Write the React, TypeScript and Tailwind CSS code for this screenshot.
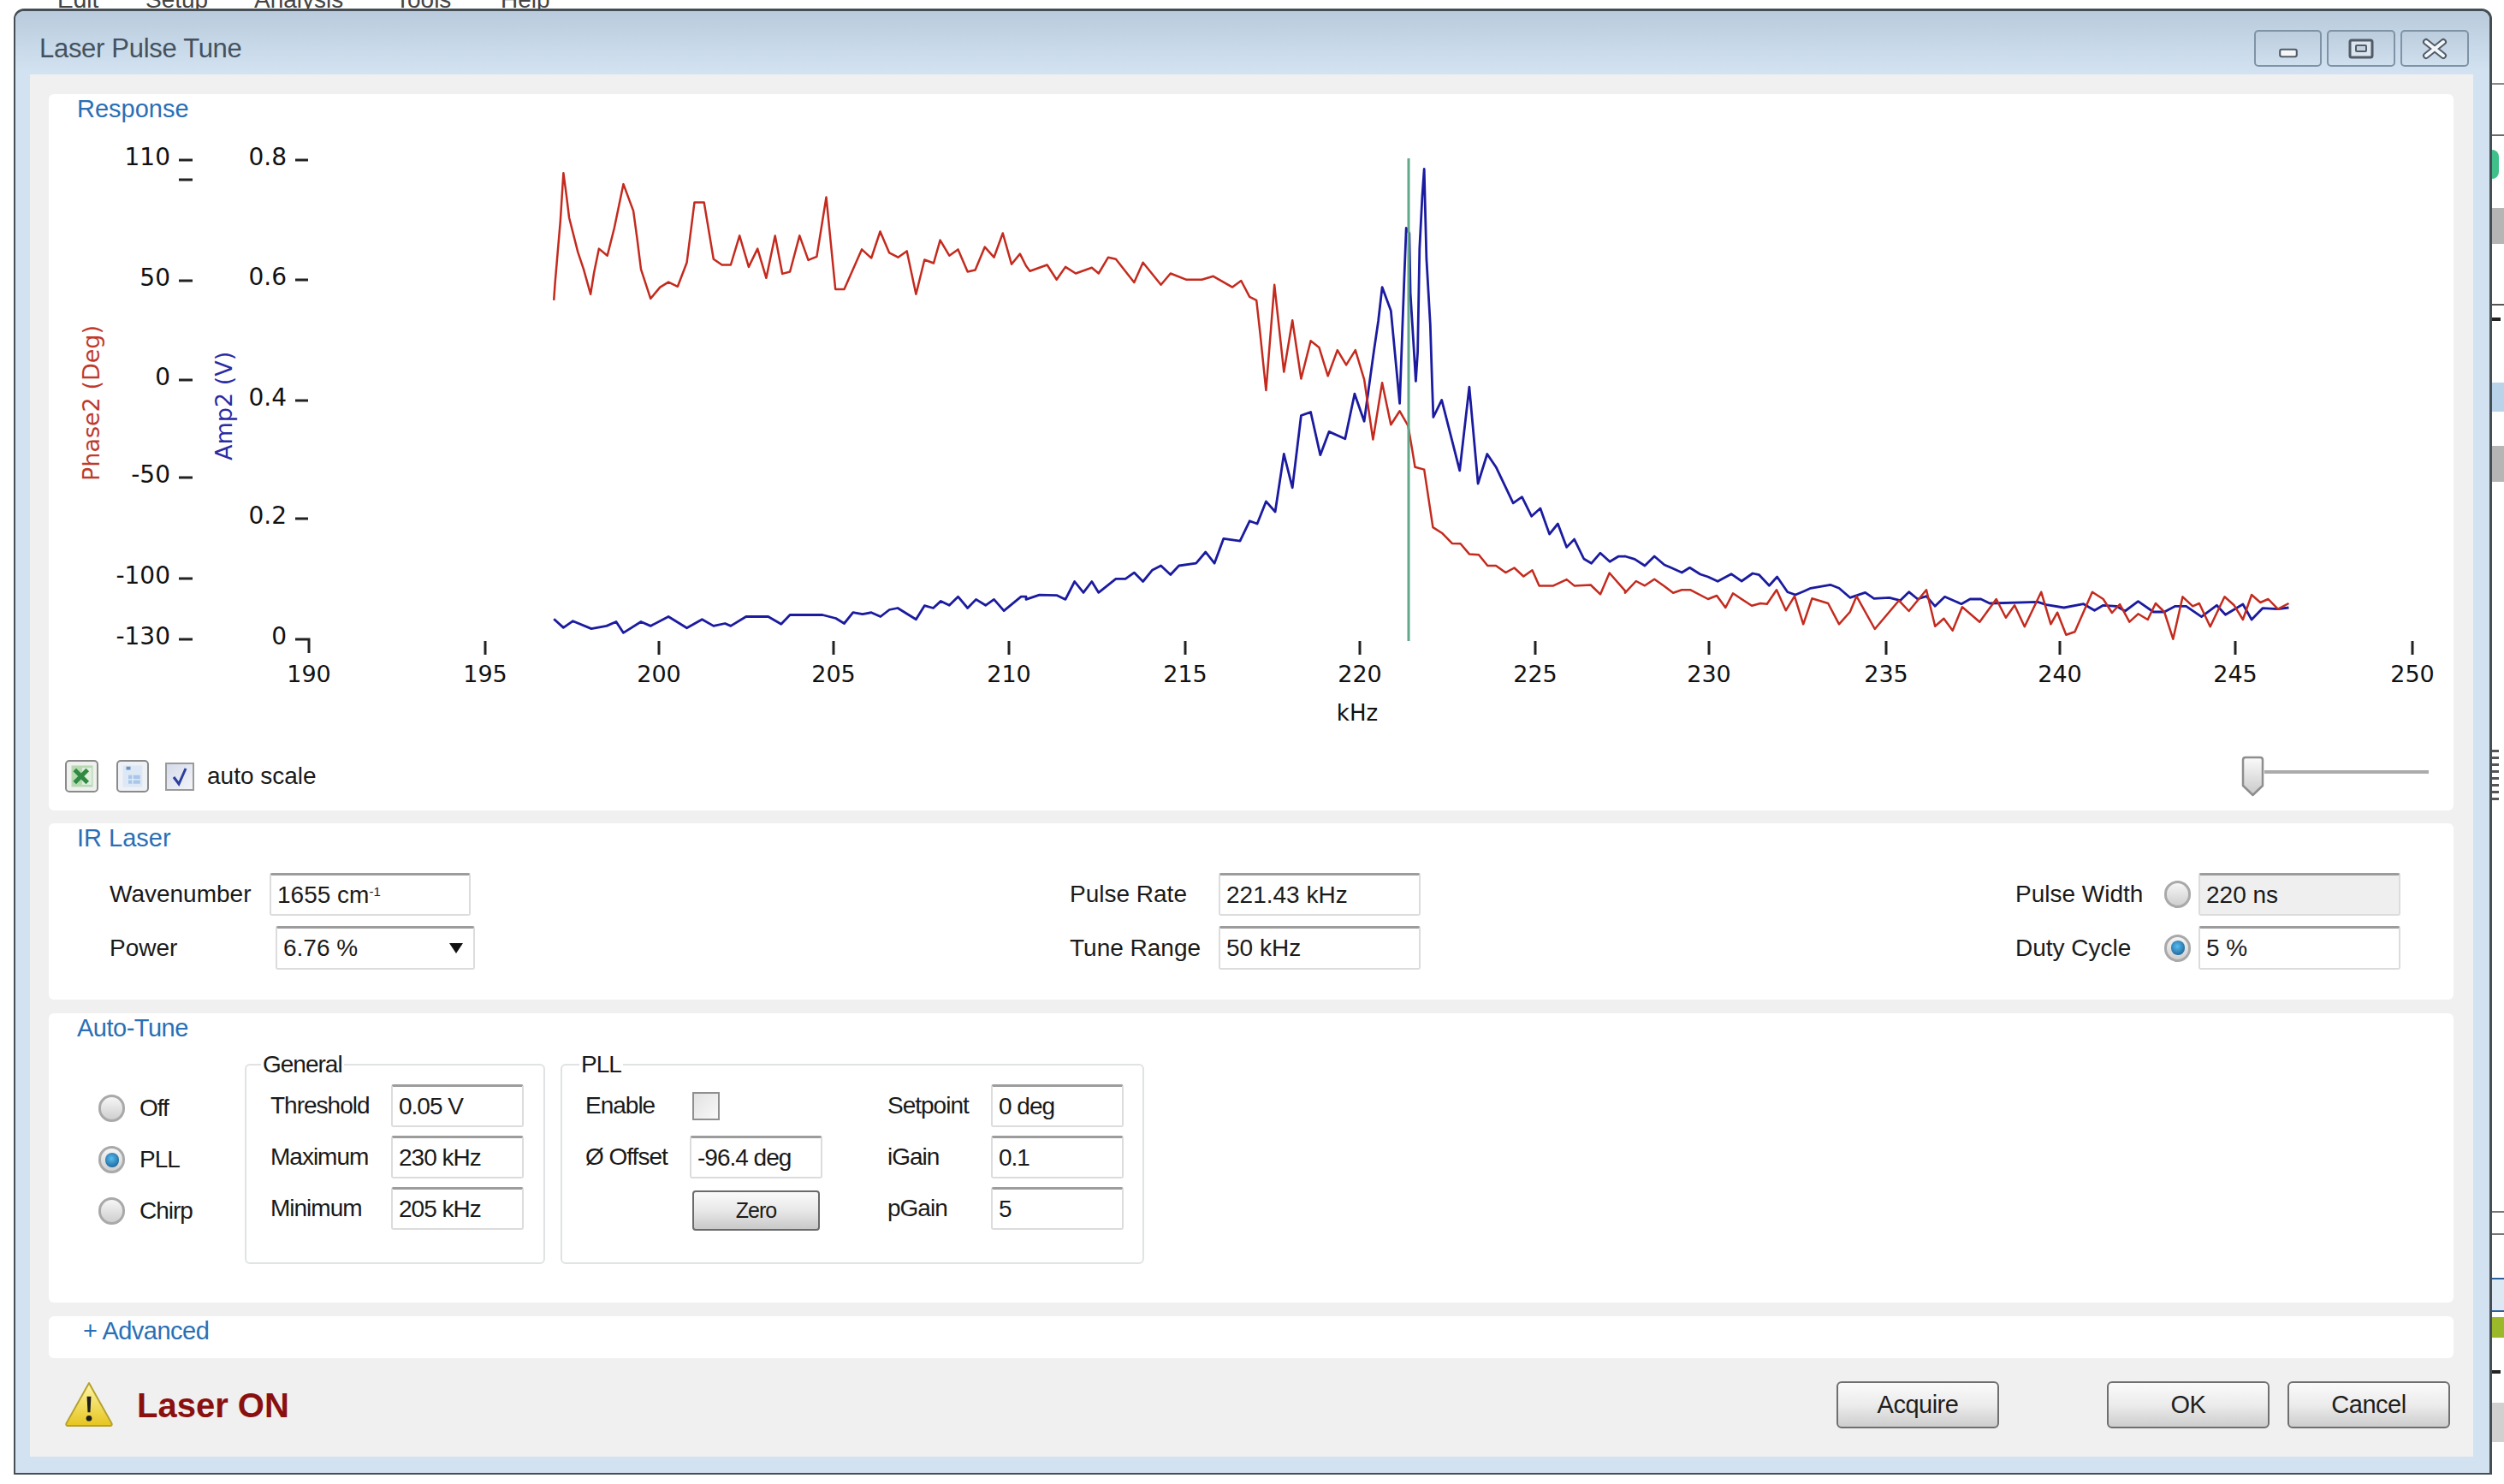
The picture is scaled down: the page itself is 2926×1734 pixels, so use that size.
import React from 'react';

// trace points were read off in crops of the plot, so each block has its own origin and scale
const toPage = (raw: number[], ox: number, oy: number, sx: number, sy: number) => {
  const out: string[] = [];
  for (let i = 0; i < raw.length; i += 2) {
    out.push(`${(ox + raw[i] / sx).toFixed(1)},${(oy + raw[i + 1] / sy).toFixed(1)}`);
  }
  return out.join(' ');
};

const redA = [332,500,335,450,342,360,349,270,357,130,365,195,372,260,395,360,410,410,428,482,437,420,450,350,472,370,490,290,514,162,530,210,540,240,550,320,560,410,585,495,610,462,632,447,656,460,680,390,700,215,725,215,750,380,772,397,795,397,818,312,842,403,865,350,888,435,911,312,930,423,950,417,975,312,998,383,1020,373,1045,200,1069,468,1092,468,1138,352,1163,377,1186,300,1210,362,1233,375,1256,357,1280,482,1302,382,1326,392,1343,325,1367,370,1390,352,1415,417,1435,412,1460,345,1484,375,1507,305,1530,395,1552,365,1568,400];
const redB = [0,400,10,415,55,397,80,440,103,403,130,422,172,405,190,422,215,375,235,380,283,448,306,390,353,455,378,422,420,440,460,440,490,430,540,462,563,443,585,490,603,500,613,600,628,762,650,455,675,708,697,558,720,728,745,618,767,637,790,720,815,645,838,688,862,645,885,730,908,905,932,740,955,862,978,822,1000,865,1010,930,1018,985,1042,992,1065,1160,1090,1178,1115,1207,1137,1208,1160,1238,1185,1240,1208,1272,1230,1272,1255,1292,1278,1278,1302,1303,1325,1285,1343,1330,1380,1330,1415,1312,1435,1330,1478,1328,1503,1355,1527,1293,1568,1345];
const redC = [0,278,25,237,45,253,67,230,90,255,110,278,130,268,150,268,190,300,210,288,230,330,247,280,290,323,310,315,325,317,347,268,368,340,388,290,408,388,428,298,465,315,490,388,515,345,530,290,572,405,605,345,627,305,650,342,690,268,710,395,730,368,750,410,772,328,812,380,850,300,872,365,892,322,915,397,953,275,975,388,990,347,1010,425,1030,415,1070,275,1095,300,1115,348,1133,318,1155,380,1175,352,1197,372,1215,315,1235,345,1255,440,1277,292,1300,325,1315,315,1340,397,1373,292,1395,322,1415,372,1435,285,1455,312,1473,300,1495,335,1520,315];
const blueA = [332,1427,357,1452,382,1433,430,1455,470,1447,495,1435,514,1467,560,1435,585,1447,632,1420,680,1453,720,1428,750,1447,780,1440,795,1447,835,1420,893,1420,927,1442,950,1415,1035,1415,1070,1425,1092,1440,1115,1408,1140,1413,1163,1408,1187,1420,1210,1400,1232,1395,1280,1428,1302,1388,1325,1395,1345,1375,1367,1387,1390,1362,1415,1395,1437,1370,1462,1387,1484,1370,1510,1403,1555,1362,1568,1362];
const blueB = [0,1370,35,1357,80,1358,103,1370,127,1318,150,1350,172,1318,190,1350,235,1310,260,1310,283,1292,306,1318,330,1285,353,1272,378,1298,400,1272,445,1265,470,1232,493,1265,517,1193,560,1200,585,1142,605,1150,628,1085,652,1115,675,947,697,1045,720,835,745,825,770,950,793,882,835,903,860,772,885,852,910,650,922,560,932,462,955,530,978,800,985,585,990,430,995,290,1003,305,1006,480,1015,640,1020,735,1025,650,1030,350,1037,200,1042,118,1048,380,1058,570,1063,750,1066,840,1088,790,1135,995,1160,752,1183,1033,1207,947,1230,985,1275,1090,1298,1072,1323,1128,1346,1105,1370,1180,1392,1150,1415,1218,1435,1195,1460,1252,1480,1265,1503,1235,1528,1260,1550,1245,1568,1245];
const blueC = [0,150,22,160,45,183,67,150,90,180,105,190,130,207,148,190,172,213,190,222,212,238,243,212,267,237,292,210,307,215,330,253,348,222,372,275,390,285,410,272,425,262,470,250,490,262,515,295,550,277,570,298,605,295,630,305,650,275,670,300,690,290,710,325,732,292,770,317,790,300,815,300,835,315,945,310,965,320,1005,330,1050,317,1075,340,1095,322,1125,325,1145,342,1175,308,1210,345,1235,345,1260,325,1285,325,1320,362,1355,322,1375,355,1415,318,1435,372,1460,332,1495,335,1520,330];

const redLine = [toPage(redA, 500, 150, 2.24, 2.489), toPage(redB, 1200, 150, 2.24, 2.489), toPage(redC, 1900, 600, 1.96, 3)].join(' ');
const blueLine = [toPage(blueA, 500, 150, 2.24, 2.489), toPage(blueB, 1200, 150, 2.24, 2.489), toPage(blueC, 1900, 600, 1.96, 3)].join(' ');

const phaseTicks = [
  { label: '110', y: 187 },
  { label: '50', y: 328 },
  { label: '0', y: 444 },
  { label: '-50', y: 558 },
  { label: '-100', y: 676 },
  { label: '-130', y: 747 },
];
const ampTicks = [
  { label: '0.8', y: 187 },
  { label: '0.6', y: 327 },
  { label: '0.4', y: 468 },
  { label: '0.2', y: 606 },
  { label: '0', y: 747 },
];
const freqTicks = [
  { label: '190', x: 362 },
  { label: '195', x: 568 },
  { label: '200', x: 771 },
  { label: '205', x: 975 },
  { label: '210', x: 1180 },
  { label: '215', x: 1386 },
  { label: '220', x: 1590 },
  { label: '225', x: 1795 },
  { label: '230', x: 1998 },
  { label: '235', x: 2205 },
  { label: '240', x: 2408 },
  { label: '245', x: 2613 },
  { label: '250', x: 2820 },
];

const Chart = () => (
  <svg viewBox="58 144 2810 738" className="h-[738px] w-[2810px] font-['DejaVu_Sans',sans-serif]">
    <g fill="#111" fontSize="28">
      {phaseTicks.map((t) => (
        <text key={t.label} x="200" y={t.y + 6} textAnchor="end">{t.label}</text>
      ))}
      {ampTicks.map((t) => (
        <text key={t.label} x="336" y={t.y + 6} textAnchor="end">{t.label}</text>
      ))}
      {freqTicks.map((t) => (
        <text key={t.label} x={t.x} y="797" textAnchor="middle" fontSize="27">{t.label}</text>
      ))}
      <text x="1587" y="842" textAnchor="middle" fontSize="26">kHz</text>
    </g>
    <g stroke="#222" strokeWidth="3" fill="none">
      {phaseTicks.map((t) => (
        <line key={t.label} x1="210" x2="226" y1={t.y} y2={t.y} />
      ))}
      <line x1="210" x2="226" y1="210" y2="210" />
      {ampTicks.slice(0, 4).map((t) => (
        <line key={t.label} x1="346" x2="361" y1={t.y} y2={t.y} />
      ))}
      <path d="M346 747H362V763" />
      {freqTicks.slice(1).map((t) => (
        <line key={t.label} x1={t.x} x2={t.x} y1="749" y2="765" />
      ))}
    </g>
    <text transform="translate(117 562) rotate(-90)" fill="#c0392b" fontSize="27">Phase2 (Deg)</text>
    <text transform="translate(272 538) rotate(-90)" fill="#2b2ba5" fontSize="27">Amp2 (V)</text>
    <polyline points={blueLine} fill="none" stroke="#1b1ba0" strokeWidth="2.8" strokeLinejoin="round" />
    <polyline points={redLine} fill="none" stroke="#c42a1e" strokeWidth="2.5" strokeLinejoin="round" />
    <line x1="1647" x2="1647" y1="185" y2="749" stroke="#62a88a" strokeWidth="3" />
  </svg>
);

const fieldBase = 'flex items-center rounded-[3px] border-2 border-t-[3px] border-[#dcdcdc] border-t-[#9c9c9c] pl-[7px]';

const Radio = ({ on }: { on?: boolean }) => (
  <span className="flex h-[32px] w-[31px] shrink-0 items-center justify-center rounded-full border-[3px] border-[#a9a9a9] bg-gradient-to-b from-[#f6f6f6] to-[#cfcfcf]">
    {on && <span className="h-[17px] w-[16px] rounded-full bg-[radial-gradient(circle_at_45%_40%,#58bdf0,#0d4f85)]" />}
  </span>
);

const ExcelIcon = () => (
  <svg viewBox="0 0 24 24" className="h-[30px] w-[30px]">
    <rect x="2" y="2" width="20" height="20" fill="#b6d9b2" />
    <rect x="12" y="4" width="9" height="16" fill="#dfeedd" />
    <path d="M5 6l12 12M17 6L5 18" stroke="#2f8a42" strokeWidth="4" />
  </svg>
);

const SheetIcon = () => (
  <svg viewBox="0 0 24 24" className="h-[30px] w-[30px]">
    <rect x="3" y="2" width="18" height="20" fill="#dce8f6" />
    <rect x="6" y="3" width="4" height="3" fill="#6d8fbc" />
    <rect x="8" y="11" width="11" height="8" fill="#a9c6e8" />
    <path d="M8 15h11M12 11v8" stroke="#e8f0fa" strokeWidth="1" />
  </svg>
);

const LaserWarning = () => (
  <svg viewBox="0 0 58 56" className="h-[55px] w-[58px]">
    <defs>
      <linearGradient id="warnFill" x1="0" y1="0" x2="0" y2="1">
        <stop offset="0" stopColor="#fff6a8" />
        <stop offset="1" stopColor="#e6c51e" />
      </linearGradient>
    </defs>
    <path d="M29 2 L56 50 Q57 53 54 53 H4 Q1 53 2 50 Z" fill="url(#warnFill)" stroke="#b4a02c" strokeWidth="2" strokeLinejoin="round" />
    <path d="M26.5 18h5l-1 19h-3z" fill="#1e1e1e" />
    <circle cx="29" cy="44" r="3.4" fill="#1e1e1e" />
  </svg>
);

const TitleButton = ({ width, children }: { width: string; children: React.ReactNode }) => (
  <div className={`flex h-[43px] ${width} items-center justify-center rounded-[5px] border-2 border-[#7f93a6] bg-gradient-to-b from-[#bccddd] to-[#d0dfee]`}>
    {children}
  </div>
);

const DialogButton = ({ label, className }: { label: string; className?: string }) => (
  <button className={`h-[55px] w-[190px] rounded-[6px] border-2 border-[#6f6f6f] bg-gradient-to-b from-[#fafafa] via-[#ececec] to-[#cdcdcd] text-[29px] tracking-[-0.5px] text-[#1f1f1f] ${className ?? ''}`}>
    {label}
  </button>
);

const Row = ({ label, labelWidth, children }: { label: string; labelWidth: string; children: React.ReactNode }) => (
  <div className="flex items-center">
    <span className={`${labelWidth} shrink-0`}>{label}</span>
    {children}
  </div>
);

const TuneField = ({ value }: { value: string }) => (
  <div className={`${fieldBase} h-[50px] w-[155px] bg-white`}>{value}</div>
);

const App = () => {
  return (
    <div className="h-[1734px] w-[2926px] overflow-hidden bg-white font-['Liberation_Sans',Arial,sans-serif] text-[28px] text-[#1a1a1a]">
      {/* bottom edge of the main window menu peeking out above the dialog */}
      <div className="h-[10px] overflow-hidden pl-[67px] text-[#444]">
        <div className="-mt-[21px] flex">
          <span className="w-[103px]">Edit</span>
          <span className="w-[127px]">Setup</span>
          <span className="w-[165px]">Analysis</span>
          <span className="w-[123px]">Tools</span>
          <span>Help</span>
        </div>
      </div>

      <div className="flex pl-[16px]">
        <div className="h-[1713px] w-[2896px] rounded-t-[12px] border-x-[2px] border-t-[3px] border-b-[2px] border-[#454e55] border-r-[3px] bg-[#d3e2f1]">
          <div className="flex h-[74px] items-end justify-between rounded-t-[10px] bg-gradient-to-b from-[#b9cbdc] to-[#d3e3f2] pb-[9px] pl-[28px] pr-[24px]">
            <span className="text-[31px] leading-[43px] tracking-[-0.3px] text-[#44525f]">Laser Pulse Tune</span>
            <div className="flex gap-[6px]">
              <TitleButton width="w-[79px]">
                <svg viewBox="0 0 32 20" className="mt-[10px] h-[14px] w-[30px]">
                  <rect x="2" y="4" width="28" height="12" rx="3" fill="#f4f7fa" stroke="#515c68" strokeWidth="3" />
                </svg>
              </TitleButton>
              <TitleButton width="w-[80px]">
                <svg viewBox="0 0 30 24" className="h-[24px] w-[30px]">
                  <rect x="2" y="2" width="26" height="20" rx="2" fill="#dbe5ef" stroke="#515c68" strokeWidth="3" />
                  <rect x="9" y="8" width="12" height="7" rx="1" fill="#c4d2e0" stroke="#515c68" strokeWidth="2" />
                </svg>
              </TitleButton>
              <TitleButton width="w-[80px]">
                <svg viewBox="0 0 32 26" className="h-[26px] w-[32px]">
                  <path d="M6 5l20 16M26 5L6 21" stroke="#515c68" strokeWidth="8" strokeLinecap="round" />
                  <path d="M6 5l20 16M26 5L6 21" stroke="#f4f7fa" strokeWidth="4" strokeLinecap="round" />
                </svg>
              </TitleButton>
            </div>
          </div>

          <div className="mx-[17px] flex h-[1615px] w-[2855px] flex-col bg-[#f0f0f0] pl-[22px] pt-[23px]">
            {/* Response */}
            <section className="h-[837px] w-[2810px] rounded-[6px] bg-white">
              <div className="flex h-[36px] items-center pl-[33px] text-[29px] text-[#2a6fb5]">Response</div>
              <div className="-mt-[2px]"><Chart /></div>
              <div className="flex h-[50px] items-center justify-between pl-[19px] pr-[29px]">
                <div className="flex items-center">
                  <div className="flex h-[38px] w-[39px] items-center justify-center rounded-[5px] border-2 border-[#8a8a8a] bg-[#eef1ee]">
                    <ExcelIcon />
                  </div>
                  <div className="ml-[21px] flex h-[38px] w-[38px] items-center justify-center rounded-[5px] border-2 border-[#8a8a8a] bg-[#eef1f5]">
                    <SheetIcon />
                  </div>
                  <div className="ml-[19px] flex h-[33px] w-[34px] items-center justify-center border-2 border-[#9a9a9a] bg-gradient-to-br from-[#d5dbea] to-[#f2f4f8]">
                    <svg viewBox="0 0 24 24" className="h-[26px] w-[24px]">
                      <path d="M5 13l6 8L19 3" fill="none" stroke="#2c3f9e" strokeWidth="3" />
                    </svg>
                  </div>
                  <span className="ml-[15px]">auto scale</span>
                </div>
                <div className="flex items-center">
                  <svg viewBox="0 0 27 48" className="h-[48px] w-[27px]">
                    <defs>
                      <linearGradient id="thumbFill" x1="0" y1="0" x2="0" y2="1">
                        <stop offset="0" stopColor="#fbfbfb" />
                        <stop offset="1" stopColor="#c9c9c9" />
                      </linearGradient>
                    </defs>
                    <path d="M2 5Q2 2 5 2H22Q25 2 25 5V35L13.5 46L2 35Z" fill="url(#thumbFill)" stroke="#8e8e8e" strokeWidth="2.5" strokeLinejoin="round" />
                  </svg>
                  <div className="mb-[10px] h-[4px] w-[192px] bg-[#ababab]" />
                </div>
              </div>
            </section>

            {/* IR Laser */}
            <section className="mt-[15px] h-[206px] w-[2810px] rounded-[6px] bg-white">
              <div className="flex h-[36px] items-center pl-[33px] text-[29px] text-[#2a6fb5]">IR Laser</div>
              <div className="mt-[22px] flex pl-[71px]">
                <div className="flex w-[1122px] flex-col gap-[12px]">
                  <Row label="Wavenumber" labelWidth="w-[187px]">
                    <div className={`${fieldBase} h-[50px] w-[235px] bg-white`}>
                      <span>1655 cm<sup className="text-[15px]">-1</sup></span>
                    </div>
                  </Row>
                  <Row label="Power" labelWidth="w-[194px]">
                    <div className={`${fieldBase} h-[51px] w-[233px] justify-between bg-white pr-[12px]`}>
                      <span>6.76 %</span>
                      <svg viewBox="0 0 16 12" className="h-[12px] w-[16px]">
                        <polygon points="0,0 16,0 8,12" fill="#111" />
                      </svg>
                    </div>
                  </Row>
                </div>
                <div className="flex w-[1105px] flex-col gap-[12px]">
                  <Row label="Pulse Rate" labelWidth="w-[174px]">
                    <div className={`${fieldBase} h-[50px] w-[236px] bg-white`}>221.43 kHz</div>
                  </Row>
                  <Row label="Tune Range" labelWidth="w-[174px]">
                    <div className={`${fieldBase} h-[51px] w-[236px] bg-white`}>50 kHz</div>
                  </Row>
                </div>
                <div className="flex flex-col gap-[12px]">
                  <Row label="Pulse Width" labelWidth="w-[174px]">
                    <div className="w-[40px]"><Radio /></div>
                    <div className={`${fieldBase} h-[50px] w-[236px] bg-[#efefef]`}>220 ns</div>
                  </Row>
                  <Row label="Duty Cycle" labelWidth="w-[174px]">
                    <div className="w-[40px]"><Radio on /></div>
                    <div className={`${fieldBase} h-[51px] w-[236px] bg-white`}>5 %</div>
                  </Row>
                </div>
              </div>
            </section>

            {/* Auto-Tune */}
            <section className="mt-[16px] h-[338px] w-[2810px] rounded-[6px] bg-white tracking-[-1px]">
              <div className="flex h-[36px] items-center pl-[33px] text-[29px] tracking-[-0.5px] text-[#2a6fb5]">Auto-Tune</div>
              <div className="mt-[6px] flex">
                <div className="flex w-[229px] flex-col pl-[58px] pt-[39px]">
                  {[
                    { label: 'Off', on: false },
                    { label: 'PLL', on: true },
                    { label: 'Chirp', on: false },
                  ].map((r) => (
                    <div key={r.label} className="flex h-[60px] items-center gap-[17px]">
                      <Radio on={r.on} />
                      <span>{r.label}</span>
                    </div>
                  ))}
                </div>

                <fieldset className="h-[251px] w-[351px] rounded-[6px] border-2 border-[#dfe3e3] pl-[28px]">
                  <legend className="-ml-[11px] px-[2px] leading-[36px]">General</legend>
                  <div className="mt-[5px] flex flex-col gap-[10px]">
                    <Row label="Threshold" labelWidth="w-[141px]"><TuneField value="0.05 V" /></Row>
                    <Row label="Maximum" labelWidth="w-[141px]"><TuneField value="230 kHz" /></Row>
                    <Row label="Minimum" labelWidth="w-[141px]"><TuneField value="205 kHz" /></Row>
                  </div>
                </fieldset>

                <fieldset className="ml-[18px] h-[251px] w-[682px] rounded-[6px] border-2 border-[#dfe3e3] pl-[27px]">
                  <legend className="-ml-[7px] px-[2px] leading-[36px]">PLL</legend>
                  <div className="mt-[5px] grid grid-cols-[122px_155px_76px_121px_155px] grid-rows-[50px_50px_50px] gap-y-[10px]">
                    <span className="flex items-center">Enable</span>
                    <div className="flex items-center pl-[3px]">
                      <div className="h-[33px] w-[32px] border-2 border-[#8f8f8f] bg-gradient-to-br from-[#e2e2e2] to-[#f8f8f8]" />
                    </div>
                    <span />
                    <span className="flex items-center">Setpoint</span>
                    <TuneField value="0 deg" />

                    <span className="flex items-center">Ø Offset</span>
                    <TuneField value="-96.4 deg" />
                    <span />
                    <span className="flex items-center">iGain</span>
                    <TuneField value="0.1" />

                    <span />
                    <div className="flex items-center pl-[3px] pt-[5px]">
                      <button className="h-[47px] w-[149px] rounded-[4px] border-2 border-[#6a6a6a] bg-gradient-to-b from-[#fafafa] via-[#e8e8e8] to-[#c9c9c9] text-[25px]">
                        Zero
                      </button>
                    </div>
                    <span />
                    <span className="flex items-center">pGain</span>
                    <TuneField value="5" />
                  </div>
                </fieldset>
              </div>
            </section>

            {/* + Advanced */}
            <section className="mt-[16px] h-[49px] w-[2810px] rounded-[6px] bg-white">
              <div className="flex h-[36px] items-center pl-[40px] text-[29px] tracking-[-0.5px] text-[#2a6fb5]">+ Advanced</div>
            </section>

            <footer className="flex h-[115px] w-[2833px] -ml-[22px] items-center justify-between pb-[6px] pl-[40px] pr-[5px]">
              <div className="flex items-center gap-[27px]">
                <LaserWarning />
                <span className="text-[40px] font-bold text-[#8a1010]">Laser ON</span>
              </div>
              <div className="flex">
                <DialogButton label="Acquire" />
                <DialogButton label="OK" className="ml-[126px]" />
                <DialogButton label="Cancel" className="ml-[21px]" />
              </div>
            </footer>
          </div>
        </div>

        {/* slivers of the application behind the dialog */}
        <div className="flex w-[14px] flex-col">
          <div className="mt-[87px] h-[2px] bg-[#8a8a8a]" />
          <div className="mt-[58px] h-[2px] bg-[#6a6a6a]" />
          <div className="mt-[16px] h-[34px] w-[8px] rounded-r-[8px] bg-[#3fc08a]" />
          <div className="mt-[34px] h-[42px] bg-[#b5b5b5]" />
          <div className="mt-[70px] h-[2px] bg-[#555]" />
          <div className="mt-[14px] h-[4px] w-[10px] bg-[#222]" />
          <div className="mt-[72px] h-[34px] bg-[#b9d4ea]" />
          <div className="mt-[40px] h-[42px] bg-[#b5b5b5]" />
          <div className="mt-[313px] h-[60px] w-[8px] bg-[repeating-linear-gradient(180deg,#555_0_3px,#fff_3px_8px)]" />
          <div className="mt-[479px] h-[2px] bg-[#777]" />
          <div className="mt-[24px] h-[2px] bg-[#777]" />
          <div className="mt-[50px] h-[40px] border-t-2 border-b-2 border-[#2a5f9e] bg-[#dce8f3]" />
          <div className="mt-[6px] h-[24px] bg-[#9ab82a]" />
          <div className="mt-[38px] h-[4px] w-[10px] bg-[#222]" />
          <div className="mt-[34px] h-[46px] bg-[#d0d0d0]" />
        </div>
      </div>
    </div>
  );
};

export default App;
